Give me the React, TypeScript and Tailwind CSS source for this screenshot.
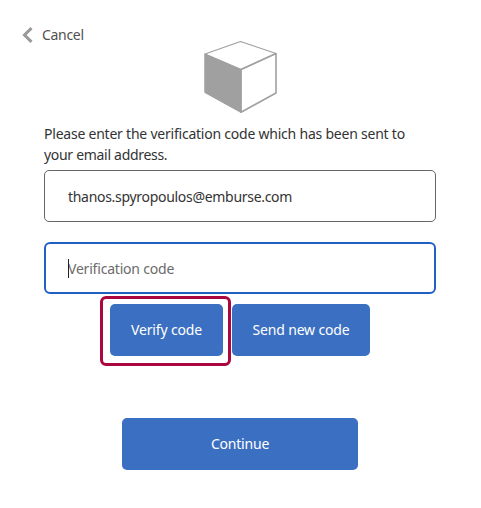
import React from 'react';

const buttonClass = 'flex h-[52px] items-center justify-center rounded-[5px] bg-[#3b6fc1] pb-[2px] text-white';

const CubeLogo: React.FC = () => (
  <svg width="74" height="74" viewBox="0 0 74 74" fill="none" stroke="#a0a0a0" strokeLinejoin="round">
    <path d="M1 14L36.5 1.5L72 13.5L37 29.5Z" strokeWidth="1.2" />
    <path d="M0.8 14L37 29.5V72.5L0.8 52.5Z" fill="#a0a0a0" strokeWidth="1" />
    <path d="M37 29.5L72 13.5V53L37 72.2Z" strokeWidth="1.6" />
  </svg>
);

const App: React.FC = () => {
  return (
    <main className="h-[508px] w-[481px] overflow-hidden bg-white px-[44px] font-['Noto_Sans','Open_Sans',sans-serif] text-[14px] leading-[21px] text-[#333333]">
      <header className="h-[123px] pt-[24px]">
        <button className="-ml-[22px] flex h-[21px] items-center gap-[8px] text-[#505050]">
          <svg width="12" height="16" viewBox="0 0 12 16" fill="none" stroke="#999999" strokeWidth="3">
            <path d="M9.5 1.2L2.5 8L9.5 14.8" />
          </svg>
          <span className="tracking-[-0.3px]">Cancel</span>
        </button>
        <div className="-mt-[5px] ml-[160px]">
          <CubeLogo />
        </div>
      </header>

      <p className="whitespace-nowrap tracking-[-0.225px]">
        Please enter the verification code which has been sent to
        <br />
        <span className="tracking-[-0.3px]">your email address.</span>
      </p>

      <div className="mt-[5px] flex h-[52px] w-[392px] items-center rounded-[5px] border border-[#666666] px-[23px]">
        <span className="tracking-[-0.3px]">thanos.spyropoulos@emburse.com</span>
      </div>

      <div className="relative mt-[20px] flex h-[52px] w-[392px] items-center rounded-[6px] border-2 border-[#2060c4] px-[22px] text-[#6b6b6b]">
        <span className="absolute left-[22px] top-[15px] h-[19px] w-px bg-[#222222]" />
        <span className="tracking-[-0.2px]">Verification code</span>
      </div>

      <div className="ml-[66px] mt-[10px] flex gap-[9px]">
        <div className="relative">
          <button className={`${buttonClass} w-[113px]`}>
            <span className="tracking-[-0.15px]">Verify code</span>
          </button>
          <span className="absolute -left-[10px] -top-[8px] z-10 h-[70px] w-[131px] rounded-[6px] border-3 border-[#aa063f]" />
        </div>
        <button className={`${buttonClass} w-[138px]`}>
          <span className="tracking-[-0.15px]">Send new code</span>
        </button>
      </div>

      <button className={`${buttonClass} ml-[78px] mt-[62px] w-[236px]`}>
        <span className="tracking-[-0.2px]">Continue</span>
      </button>
    </main>
  );
};

export default App;
